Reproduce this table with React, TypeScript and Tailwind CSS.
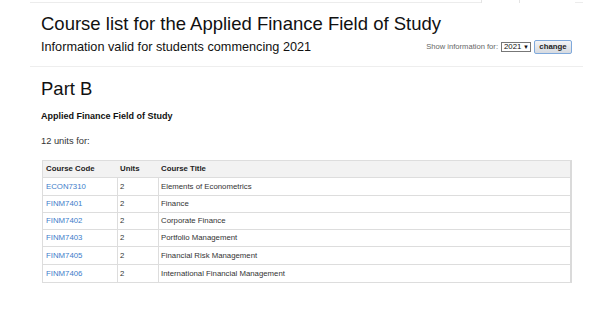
import React from "react";

interface Course {
  code: string;
  units: number;
  title: string;
}

const courses: Course[] = [
  { code: "ECON7310", units: 2, title: "Elements of Econometrics" },
  { code: "FINM7401", units: 2, title: "Finance" },
  { code: "FINM7402", units: 2, title: "Corporate Finance" },
  { code: "FINM7403", units: 2, title: "Portfolio Management" },
  { code: "FINM7405", units: 2, title: "Financial Risk Management" },
  { code: "FINM7406", units: 2, title: "International Financial Management" },
];

export default function App() {
  return (
    <div className="w-[600px] h-[312px] bg-white overflow-hidden font-['Liberation_Sans',Arial,sans-serif] text-[#222]">
      {/* Top nav strip (cut off) */}
      <div className="flex h-[3px] ml-[30px]">
        <div className="w-[451px] border-b border-[#ececec]" />
        <div className="w-[39px] border-x border-[#e4e4e4]" />
        <div className="w-[55px]" />
        <div className="w-[8px] border-b border-[#ececec]" />
      </div>

      {/* Page header */}
      <div className="ml-[30px] w-[553px] px-[11px] pb-[11px] border-b border-[#eeeeee]">
        <h1 className="mt-[11px] text-[18.5px] leading-[20px] text-[#111]">
          Course list for the Applied Finance Field of Study
        </h1>
        <div className="mt-[5px] h-[16px] flex items-center justify-between">
          <p className="text-[12.7px] leading-[16px] text-[#111]">
            Information valid for students commencing 2021
          </p>
          <div className="flex items-center gap-[3px]">
            <span className="text-[7.6px] leading-none text-[#666]">Show information for:</span>
            <div className="h-[10px] w-[30px] border border-[#777] flex items-center justify-between pl-[2px] pr-[1px] text-[7.8px] leading-none text-[#111]">
              <span>2021</span>
              <span className="text-[6px]">▼</span>
            </div>
            <button className="h-[14px] w-[38px] border border-[#7fa9dc] rounded-[2px] bg-linear-to-b from-[#f3f4f6] to-[#d6dae0] text-[7.8px] leading-none font-bold text-[#222]">
              change
            </button>
          </div>
        </div>
      </div>

      {/* Content */}
      <div className="pl-[41px]">
        <h2 className="mt-[12px] text-[18.5px] leading-[20px] text-[#111]">Part B</h2>
        <h3 className="mt-[11px] text-[9px] leading-[12px] font-bold text-[#111]">
          Applied Finance Field of Study
        </h3>
        <p className="mt-[13px] text-[9.3px] leading-[12px] text-[#333]">12 units for:</p>

        <div className="mt-[13px] ml-[1px] w-[530px] border border-[#dddddd] border-r-2 border-r-[#dadada]">
          <div className="flex h-[17.3px] items-center bg-[#f2f2f2] border-b border-[#dddddd] text-[7.8px] font-bold text-[#222]">
            <div className="w-[74px] pl-[3px]">Course Code</div>
            <div className="w-[41px] pl-[3px]">Units</div>
            <div className="flex-1 pl-[3px]">Course Title</div>
          </div>
          {courses.map((c, i) => (
            <div
              key={c.code}
              className={`flex h-[17.3px] text-[7.8px] text-[#333] ${
                i < courses.length - 1 ? "border-b border-[#dddddd]" : ""
              }`}
            >
              <div className="w-[74px] pl-[3px] flex items-center text-[#3d7dca]">{c.code}</div>
              <div className="w-[41px] pl-[2px] flex items-center border-l border-[#dddddd]">{c.units}</div>
              <div className="flex-1 pl-[2px] flex items-center border-l border-[#dddddd]">{c.title}</div>
            </div>
          ))}
        </div>
      </div>
    </div>
  );
}
